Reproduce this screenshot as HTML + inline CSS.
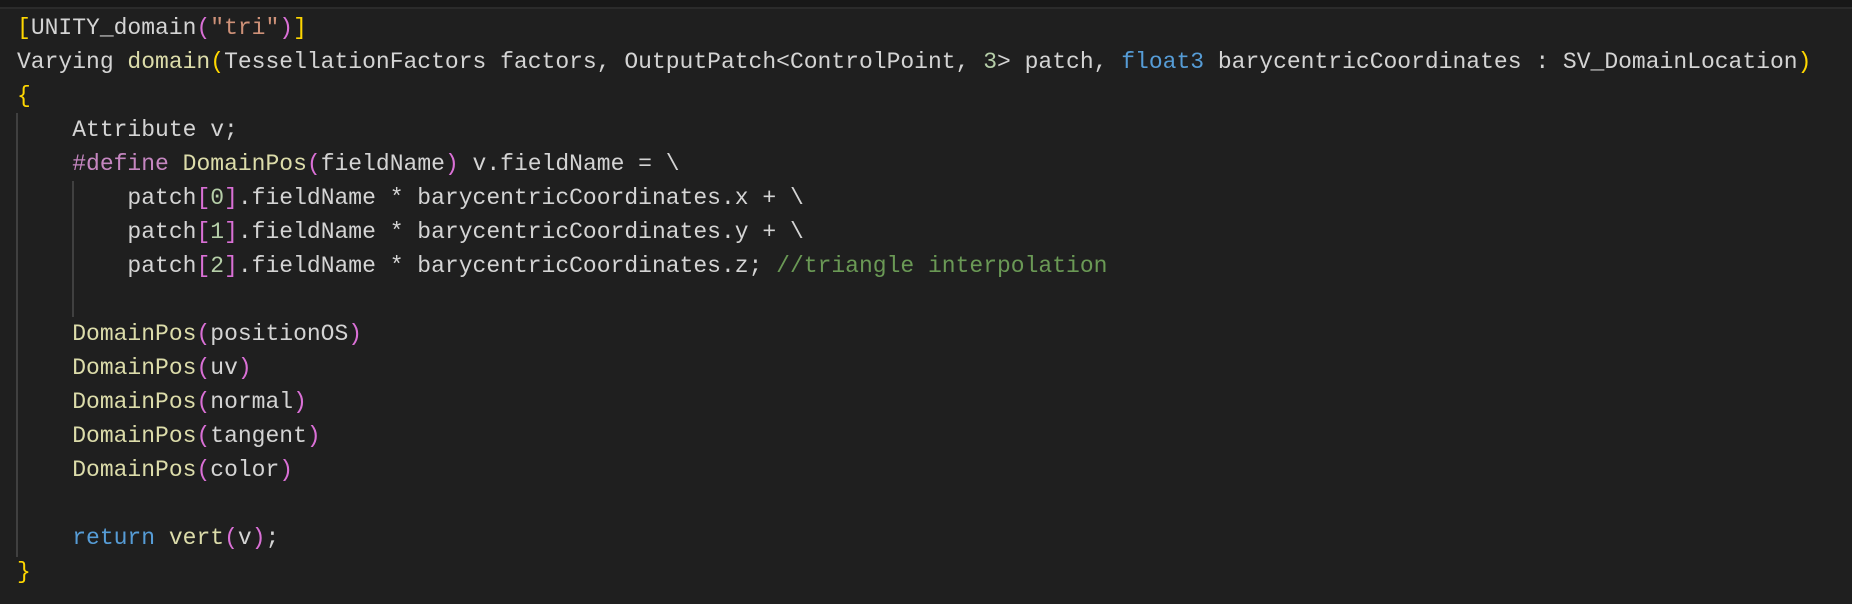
<!DOCTYPE html>
<html><head><style>
html,body{margin:0;padding:0;width:1852px;height:604px;overflow:hidden;background:#1f1f1f;}
.top{position:absolute;left:0;top:0;width:1852px;height:7px;background:#181818;border-bottom:2px solid #2b2b2b;}
pre{position:absolute;left:17px;top:11px;margin:0;font-family:"Liberation Mono",monospace;font-size:23px;line-height:34px;color:#d4d4d4;}
.g{color:#ffd700}.p{color:#da70d6}.b{color:#179fff}.s{color:#ce9178}.k{color:#569cd6}.f{color:#dcdcaa}.c{color:#6a9955}.m{color:#c586c0}.n{color:#b5cea8}
.guide{position:absolute;width:2px;background:#404040;}
</style></head><body>
<div class="top"></div>
<div class="guide" style="left:16px;top:113px;height:444px"></div>
<div class="guide" style="left:72px;top:181px;height:136px"></div>
<pre><span class="g">[</span>UNITY_domain<span class="p">(</span><span class="s">"tri"</span><span class="p">)</span><span class="g">]</span>
Varying <span class="f">domain</span><span class="g">(</span>TessellationFactors factors, OutputPatch&lt;ControlPoint, <span class="n">3</span>&gt; patch, <span class="k">float3</span> barycentricCoordinates : SV_DomainLocation<span class="g">)</span>
<span class="g">{</span>
    Attribute v;
    <span class="m">#define</span> <span class="f">DomainPos</span><span class="p">(</span>fieldName<span class="p">)</span> v.fieldName = \
        patch<span class="p">[</span><span class="n">0</span><span class="p">]</span>.fieldName * barycentricCoordinates.x + \
        patch<span class="p">[</span><span class="n">1</span><span class="p">]</span>.fieldName * barycentricCoordinates.y + \
        patch<span class="p">[</span><span class="n">2</span><span class="p">]</span>.fieldName * barycentricCoordinates.z; <span class="c">//triangle interpolation</span>

    <span class="f">DomainPos</span><span class="p">(</span>positionOS<span class="p">)</span>
    <span class="f">DomainPos</span><span class="p">(</span>uv<span class="p">)</span>
    <span class="f">DomainPos</span><span class="p">(</span>normal<span class="p">)</span>
    <span class="f">DomainPos</span><span class="p">(</span>tangent<span class="p">)</span>
    <span class="f">DomainPos</span><span class="p">(</span>color<span class="p">)</span>

    <span class="k">return</span> <span class="f">vert</span><span class="p">(</span>v<span class="p">)</span>;
<span class="g">}</span></pre>
</body></html>
